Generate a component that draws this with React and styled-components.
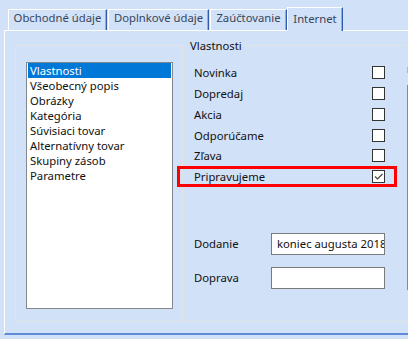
import React from "react";
import styled, { createGlobalStyle } from "styled-components";

const GlobalStyle = createGlobalStyle`
  html, body {
    margin: 0;
    padding: 0;
    background: #d1e1f8;
  }
  body {
    font-family: "Noto Sans", "Open Sans", sans-serif;
    font-size: 11.3px;
    color: #111;
  }
  * {
    box-sizing: border-box;
  }
`;

const tabs = [
  { label: "Obchodné údaje", width: 99, gap: 1 },
  { label: "Doplnkové údaje", width: 101, gap: 1 },
  { label: "Zaúčtovanie", width: 77, gap: 0 },
  { label: "Internet", width: 56, gap: 0, active: true },
];

const sections = [
  "Vlastnosti",
  "Všeobecný popis",
  "Obrázky",
  "Kategória",
  "Súvisiaci tovar",
  "Alternatívny tovar",
  "Skupiny zásob",
  "Parametre",
];

const flags = [
  { label: "Novinka" },
  { label: "Dopredaj" },
  { label: "Akcia" },
  { label: "Odporúčame" },
  { label: "Zľava" },
  { label: "Pripravujeme", checked: true, marked: true },
];

const App = () => {
  return (
    <>
      <GlobalStyle />
      <Page>
        <TabStrip>
          {tabs.map((tab) => (
            <Tab
              key={tab.label}
              $width={tab.width}
              $gap={tab.gap}
              $active={tab.active}
            >
              {tab.label}
            </Tab>
          ))}
        </TabStrip>
        <Panel>
          <Frame>
            <ListSection>
              <ListBox>
                {sections.map((item, i) => (
                  <ListItem key={item} $selected={i === 0}>
                    {item}
                  </ListItem>
                ))}
              </ListBox>
            </ListSection>
            <PropsSection>
              <TitleRow>
                <Title>Vlastnosti</Title>
                <TitleLine />
              </TitleRow>
              <CheckList>
                {flags.map((flag) => (
                  <CheckRow key={flag.label} $marked={flag.marked}>
                    <span>{flag.label}</span>
                    <CheckBox>
                      {flag.checked && (
                        <svg width="11" height="11" viewBox="0 0 11 11">
                          <path
                            d="M2 5.5 L4.5 8 L9.5 3"
                            fill="none"
                            stroke="#444"
                            strokeWidth="1.2"
                          />
                        </svg>
                      )}
                    </CheckBox>
                  </CheckRow>
                ))}
              </CheckList>
              <FieldList>
                <FieldRow>
                  <FieldLabel>Dodanie</FieldLabel>
                  <TextBox readOnly value="koniec augusta 2018" />
                </FieldRow>
                <FieldRow>
                  <FieldLabel>Doprava</FieldLabel>
                  <TextBox readOnly value="" />
                </FieldRow>
              </FieldList>
            </PropsSection>
            <EdgeColumn>
              <EdgeGlyph />
              <EdgeBorder />
            </EdgeColumn>
          </Frame>
        </Panel>
      </Page>
    </>
  );
};

const Page = styled.div`
  width: 408px;
  height: 339px;
  overflow: hidden;
  padding: 7px 0 0 4px;
`;

const TabStrip = styled.div`
  display: flex;
  align-items: flex-end;
  height: 23px;
  padding-left: 4px;
`;

const Tab = styled.div`
  position: relative;
  z-index: ${({ $active }) => ($active ? 1 : 0)};
  width: ${({ $width }) => $width}px;
  height: ${({ $active }) => ($active ? 24 : 21)}px;
  margin-right: ${({ $gap }) => $gap}px;
  margin-bottom: ${({ $active }) => ($active ? -1 : 0)}px;
  padding-top: ${({ $active }) => ($active ? 2.7 : 0.3)}px;
  background: #d1e1f8;
  border-top: 1px solid #ffffff;
  border-left: 1px solid #ffffff;
  border-right: 1px solid #2f5cb0;
  box-shadow: inset -1px 0 0 #8eaee0;
  color: #38465c;
  line-height: 15px;
  text-align: center;
  white-space: nowrap;
`;

const Panel = styled.div`
  height: 305px;
  padding: 14px 0 12px 10px;
  border-top: 1px solid #ffffff;
  border-left: 1px solid #ffffff;
  border-bottom: 2px solid #5f8ad6;
`;

const Frame = styled.div`
  display: flex;
  height: 277px;
  width: 420px;
  border-left: 1px solid #e3e3e3;
  border-bottom: 1px solid #e3e3e3;
`;

const ListSection = styled.div`
  flex: none;
  width: 167px;
  padding: 16px 0 0 10px;
  border-top: 1px solid #e3e3e3;
  border-right: 1px solid #e3e3e3;
`;

const ListBox = styled.div`
  width: 147px;
  height: 247px;
  background: #ffffff;
  border: 1px solid #828790;
  padding: 0 1px;
`;

const ListItem = styled.div`
  height: 15px;
  line-height: 15px;
  padding-left: 2px;
  white-space: nowrap;
  background: ${({ $selected }) => ($selected ? "#0078d7" : "transparent")};
  color: ${({ $selected }) => ($selected ? "#ffffff" : "#111")};
`;

const PropsSection = styled.div`
  flex: none;
  width: 224px;
  display: flex;
  flex-direction: column;
`;

const TitleRow = styled.div`
  display: flex;
  align-items: center;
  height: 15px;
  margin-top: -7px;
  padding-left: 7px;
  gap: 1px;
`;

const Title = styled.span`
  line-height: 15px;
  color: #111;
`;

const TitleLine = styled.div`
  flex: 1;
  height: 1px;
  background: #e3e3e3;
`;

const CheckList = styled.div`
  display: flex;
  flex-direction: column;
  margin-top: 9.3px;
`;

const CheckRow = styled.div`
  position: relative;
  display: flex;
  align-items: center;
  justify-content: space-between;
  width: 202px;
  height: 20.8px;
  padding-left: 11px;
  line-height: 15px;

  &::after {
    content: "";
    display: ${({ $marked }) => ($marked ? "block" : "none")};
    position: absolute;
    top: 0;
    bottom: 0;
    left: -6px;
    right: -12px;
    border: 3px solid #ff0000;
  }
`;

const CheckBox = styled.div`
  display: flex;
  align-items: center;
  justify-content: center;
  width: 13px;
  height: 13px;
  background: #ffffff;
  border: 1px solid #333333;
`;

const FieldList = styled.div`
  display: flex;
  flex-direction: column;
  gap: 12px;
  margin-top: 45.9px;
`;

const FieldRow = styled.div`
  display: flex;
  align-items: center;
  height: 22px;
  padding-left: 11px;
`;

const FieldLabel = styled.div`
  width: 48px;
  margin-right: 29px;
  white-space: nowrap;
  line-height: 15px;
`;

const TextBox = styled.input`
  width: 114px;
  height: 22px;
  margin: 0;
  padding: 0 0 0 5px;
  border: 1px solid #7a7a7a;
  border-radius: 0;
  background: #ffffff;
  font: inherit;
  color: #111;
  outline: none;
`;

const EdgeColumn = styled.div`
  flex: none;
  width: 10px;
  display: flex;
  flex-direction: column;
  padding-top: 22px;
`;

const EdgeGlyph = styled.div`
  width: 1px;
  height: 6px;
  background: #c9b86a;
`;

const EdgeBorder = styled.div`
  width: 1px;
  height: 205px;
  margin-top: 12px;
  background: #8a8a8a;
`;

export default App;
